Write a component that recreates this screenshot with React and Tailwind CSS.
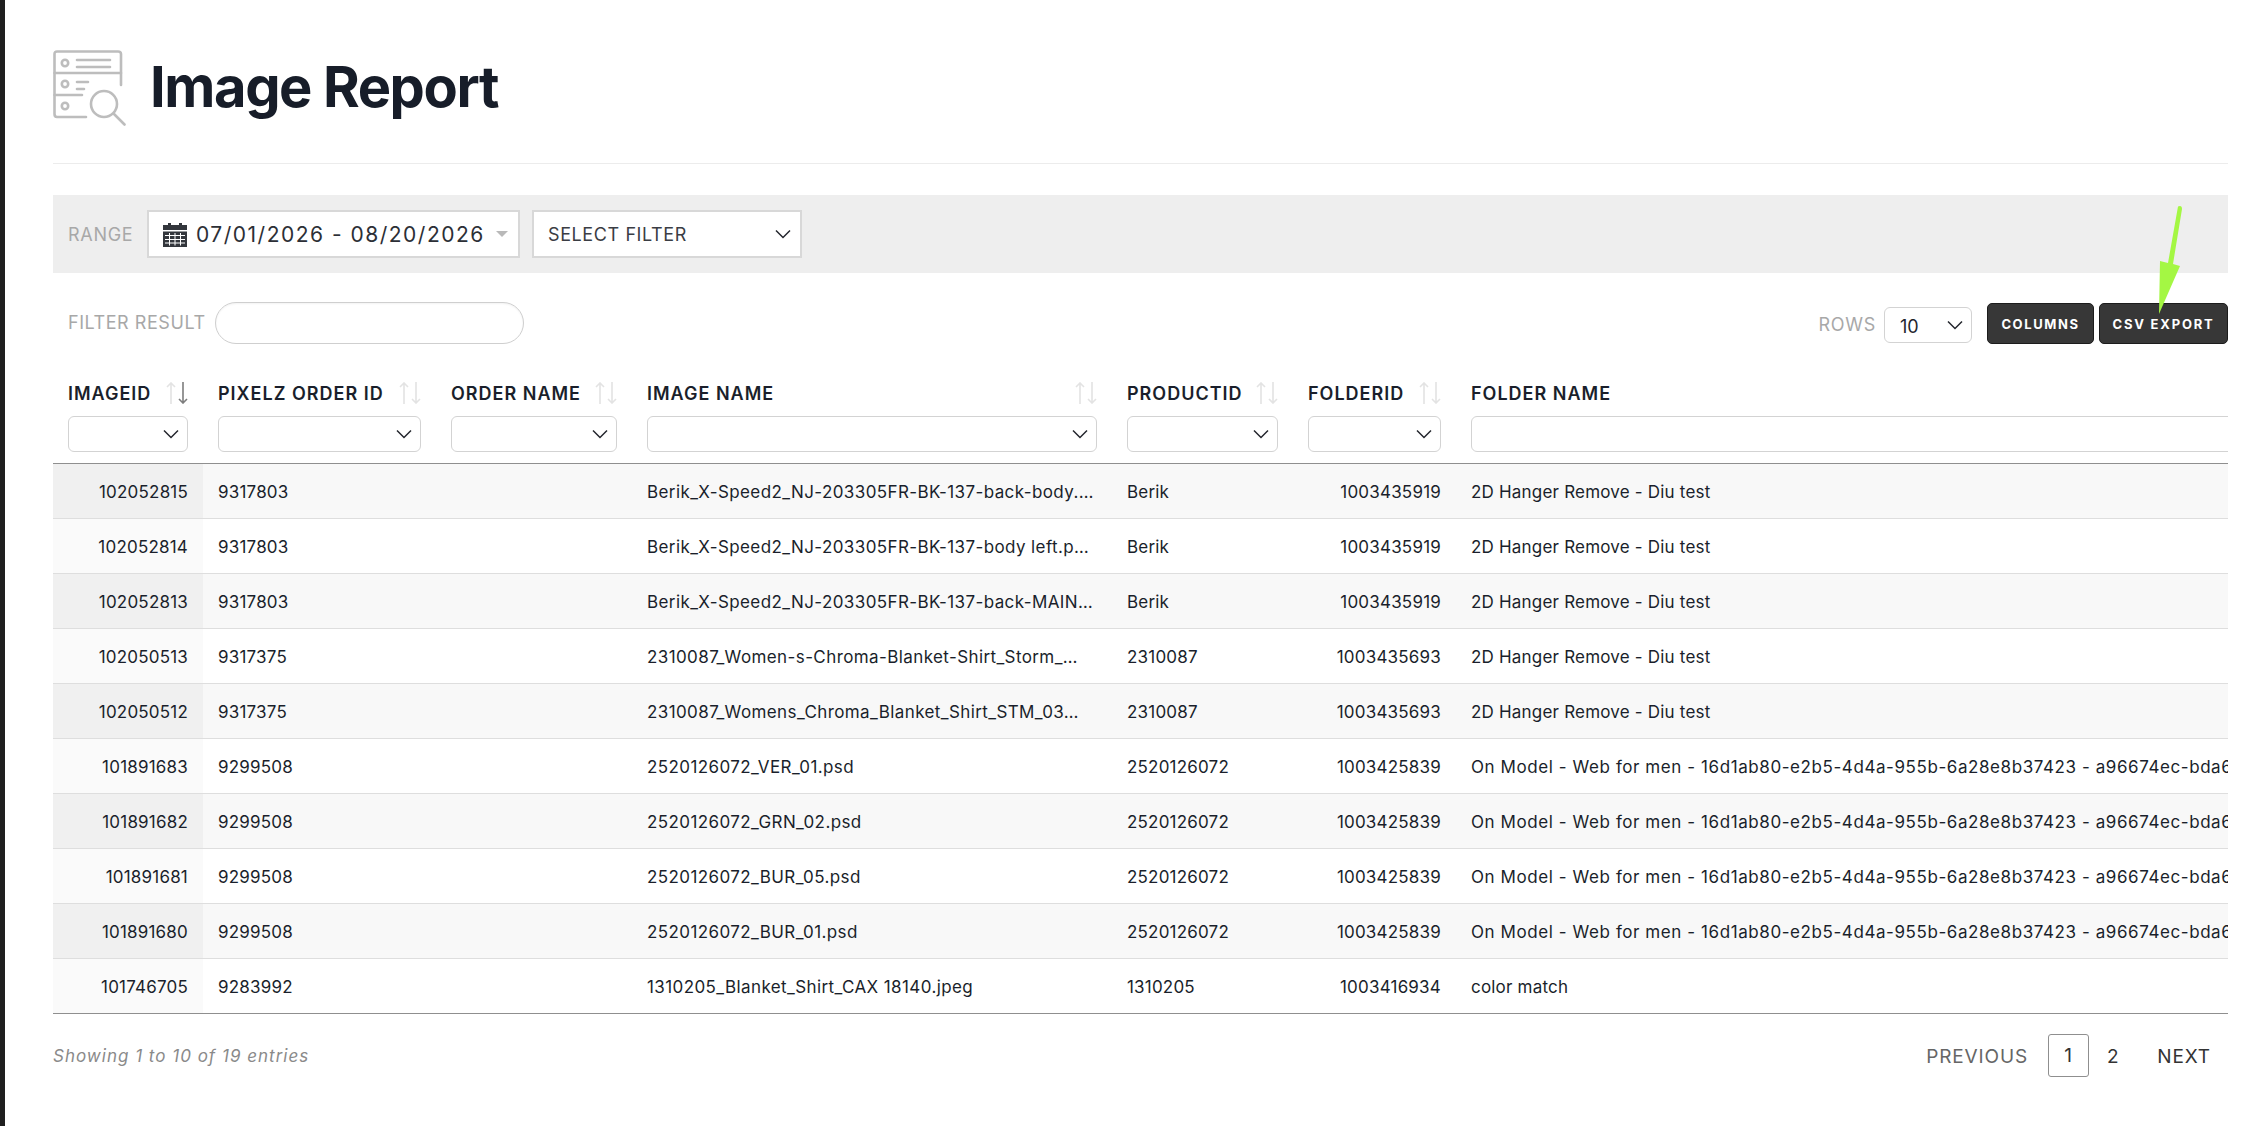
const ff = "font-['Inter',sans-serif]";
const Chev = ({ className = "" }) => (
  <svg viewBox="0 0 16 10" className={className} fill="none" stroke="#23262d" strokeWidth="1.5"><path d="M1 1.5 L8 8.5 L15 1.5" /></svg>
);
const Sort = ({ active }) => (
  <svg viewBox="0 0 22 22" className="w-[22px] h-[22px] shrink-0" fill="none" strokeWidth="1.6">
    <path stroke="#e3e3e3" d="M5 22 V1 M1 5 L5 1 L9 5" />
    <path stroke={active ? "#7d7d7d" : "#e3e3e3"} d="M17 0 V21 M13 17 L17 21 L21 17" />
  </svg>
);
const cols = [
  { n: "IMAGEID", w: "w-[150px]", s: true },
  { n: "PIXELZ ORDER ID", w: "w-[233px]" },
  { n: "ORDER NAME", w: "w-[196px]" },
  { n: "IMAGE NAME", w: "w-[480px]" },
  { n: "PRODUCTID", w: "w-[181px]" },
  { n: "FOLDERID", w: "w-[163px]" },
  { n: "FOLDER NAME", w: "w-[1000px]", text: true },
];
const H = "2D Hanger Remove - Diu test";
const M = "On Model - Web for men - 16d1ab80-e2b5-4d4a-955b-6a28e8b37423 - a96674ec-bda6-4d5e-8f1b-7c2a4b9e1234";
const rows = [
  ["102052815", "9317803", "Berik_X-Speed2_NJ-203305FR-BK-137-back-body.…", "Berik", "1003435919", H],
  ["102052814", "9317803", "Berik_X-Speed2_NJ-203305FR-BK-137-body left.p…", "Berik", "1003435919", H],
  ["102052813", "9317803", "Berik_X-Speed2_NJ-203305FR-BK-137-back-MAIN…", "Berik", "1003435919", H],
  ["102050513", "9317375", "2310087_Women-s-Chroma-Blanket-Shirt_Storm_…", "2310087", "1003435693", H],
  ["102050512", "9317375", "2310087_Womens_Chroma_Blanket_Shirt_STM_03…", "2310087", "1003435693", H],
  ["101891683", "9299508", "2520126072_VER_01.psd", "2520126072", "1003425839", M],
  ["101891682", "9299508", "2520126072_GRN_02.psd", "2520126072", "1003425839", M],
  ["101891681", "9299508", "2520126072_BUR_05.psd", "2520126072", "1003425839", M],
  ["101891680", "9299508", "2520126072_BUR_01.psd", "2520126072", "1003425839", M],
  ["101746705", "9283992", "1310205_Blanket_Shirt_CAX 18140.jpeg", "1310205", "1003416934", "color match"],
];
export default function App() {
  return (
    <div className={`${ff} relative w-[2266px] h-[1126px] overflow-hidden bg-white flex text-[#1a1f2b]`}>
      <div className="w-[5px] bg-[#1f1f1f] shrink-0" />
      <main className="w-[2175px] ml-[48px] flex flex-col">
        <header className="h-[163px] shrink-0 border-b border-[#ececec] flex items-start box-content">
          <svg viewBox="0 0 73 76" className="w-[73px] h-[76px] mt-[50px]" fill="none" stroke="#bdbdbd" strokeWidth="2.6" strokeLinecap="round" strokeLinejoin="round">
            <path d="M1.5 23 V4 Q1.5 1.5 4 1.5 H65 Q68 1.5 68 4 V23 H1.5 Z" />
            <path d="M1.5 23 V45 H29 M68 23 V35" />
            <path d="M1.5 45 V64 Q1.5 67 4 67 H33" />
            <circle cx="12" cy="13" r="3.2" /><circle cx="12" cy="34" r="3.2" /><circle cx="12" cy="56" r="3.2" />
            <path d="M24 10 H57 M24 17 H57 M24 32 H35 M24 39 H31" />
            <circle cx="51" cy="54" r="13" />
            <path d="M61 64 L71.5 74.5" />
          </svg>
          <h1 className="ml-[24px] mt-[55px] text-[56px] leading-[64px] font-bold tracking-[-1.4px] text-[#171d29]">Image Report</h1>
        </header>
        <div className="mt-[31px] h-[78px] shrink-0 bg-[#eeeeee] flex items-center pl-[15px]">
          <span className="text-[18px] tracking-[0.7px] text-[#a8a8a8] w-[79px] pt-[1px]">RANGE</span>
          <div className="w-[373px] h-[48px] bg-white border-2 border-[#d8d8d8] flex items-center pl-[14px] relative">
            <svg viewBox="0 0 24 25" className="w-[24px] h-[25px] shrink-0">
              <path fill="#33363c" d="M0 3 H5 V1 H8 V3 H16 V1 H19 V3 H24 V8 H0 Z M0 9.5 H24 V25 H0 Z" />
              <path stroke="#fff" strokeWidth="1" d="M6.5 11 V23.5 M12 11 V23.5 M17.5 11 V23.5 M2 13.5 H22 M2 17.5 H22 M2 21 H22" />
            </svg>
            <span className="ml-[9px] text-[21px] tracking-[1.5px] text-[#2c2f36] whitespace-nowrap pt-[1px]">07/01/2026 - 08/20/2026</span>
            <span className="absolute right-[10px] top-[19px] w-0 h-0 border-x-[6px] border-x-transparent border-t-[6px] border-t-[#b9b9b9]" />
          </div>
          <div className="ml-[12px] w-[270px] h-[48px] bg-white border-2 border-[#d8d8d8] flex items-center justify-between pl-[14px] pr-[9px]">
            <span className="text-[18px] tracking-[0.6px] text-[#3a3d44] pt-[1px]">SELECT FILTER</span>
            <Chev className="w-[16px] h-[10px]" />
          </div>
        </div>
        <div className="mt-[29px] h-[43px] shrink-0 flex items-center pl-[15px]">
          <span className="text-[18px] tracking-[0.55px] text-[#a8a8a8] w-[147px] whitespace-nowrap pb-[2px]">FILTER RESULT</span>
          <div className="w-[309px] h-[42px] rounded-full border border-[#cfcfcf] shadow-[inset_0_1px_2px_rgba(0,0,0,0.05)] -mt-[1px]" />
          <span className="ml-auto text-[18px] tracking-[0.7px] text-[#a8a8a8] pt-[1px]">ROWS</span>
          <div className="ml-[8px] w-[88px] h-[36px] rounded-[6px] border border-[#d3d3d3] flex items-center justify-between pl-[15px] pr-[8px] mt-[3px]">
            <span className="text-[18px] text-[#23262d] mt-[2px]">10</span>
            <Chev className="w-[16px] h-[10px]" />
          </div>
          <button className="ml-[15px] w-[107px] h-[41px] rounded-[5px] bg-[#373737] border border-[#1c1c1c] text-white text-[13px] font-bold tracking-[1.6px] pt-[2px]">COLUMNS</button>
          <button className="ml-[5px] w-[129px] h-[41px] rounded-[5px] bg-[#373737] border border-[#1c1c1c] text-white text-[13px] font-bold tracking-[1.8px] pt-[2px]">CSV EXPORT</button>
        </div>
        <div className="mt-[28px] overflow-hidden w-[2175px]">
          <table className="table-fixed border-separate border-spacing-0 w-[2403px]">
            <thead>
              <tr>
                {cols.map((c) => (
                  <th key={c.n} className={`${c.w} h-[91px] px-[15px] align-top font-normal text-left border-b border-[#8f8f8f] p-0`}>
                    <div className="h-[43px] flex items-center justify-between pb-[3px]">
                      <span className="text-[18px] font-semibold tracking-[1px] whitespace-nowrap">{c.n}</span>
                      {!c.text && <Sort active={c.s} />}
                    </div>
                    <div className={`h-[36px] ${c.text ? "rounded-l-[6px]" : "rounded-[6px]"} border border-[#d3d3d3] flex items-center justify-end pr-[8px]`}>
                      {!c.text && <Chev className="w-[16px] h-[10px]" />}
                    </div>
                  </th>
                ))}
              </tr>
            </thead>
            <tbody>
              {rows.map((r, i) => {
                const odd = i % 2 === 0;
                const bg = odd ? "bg-[#f8f8f8]" : "bg-white";
                const first = odd ? "bg-[#f0f0f0]" : "bg-[#fafafa]";
                const line = i === 9 ? "border-b border-[#8f8f8f]" : "border-b border-[#dedede]";
                const td = `${line} h-[55px] px-[15px] pt-[3px] text-[17px] whitespace-nowrap`;
                return (
                  <tr key={r[0]}>
                    <td className={`${td} tracking-[0.2px] text-right ${first}`}>{r[0]}</td>
                    <td className={`${td} tracking-[0.2px] ${bg}`}>{r[1]}</td>
                    <td className={`${td} ${bg}`}></td>
                    <td className={`${td} tracking-[0.4px] ${bg} truncate`}>{r[2]}</td>
                    <td className={`${td} tracking-[0.2px] ${bg}`}>{r[3]}</td>
                    <td className={`${td} tracking-[0.2px] ${bg} text-right`}>{r[4]}</td>
                    <td className={`${td} ${bg} ${r[5] === M ? "tracking-[0.58px]" : "tracking-[0.2px]"}`}>{r[5]}</td>
                  </tr>
                );
              })}
            </tbody>
          </table>
        </div>
        <div className="flex items-center h-[83px]">
          <span className="text-[17px] italic tracking-[1px] text-[#8a8a8a] pt-[3px]">Showing 1 to 10 of 19 entries</span>
          <div className="ml-auto flex items-center text-[19px] tracking-[0.9px] pr-[17px]">
            <span className="text-[#666] pt-[3px]">PREVIOUS</span>
            <span className="ml-[20px] w-[41px] h-[43px] rounded-[3px] border border-[#8f8f8f] flex items-center justify-center text-[#333] pt-[2px]">1</span>
            <span className="w-[48px] text-center text-[#333] pt-[3px]">2</span>
            <span className="ml-[20px] text-[#333] pt-[3px]">NEXT</span>
          </div>
        </div>
      </main>
      <svg viewBox="0 0 30 112" className="absolute left-[2155px] top-[204px] w-[30px] h-[112px]" fill="#a4f743">
        <path d="M23 2.5 Q27 1 27 5 L18 60 L25 62 L4 110 L5 57 L13 59 Z" />
      </svg>
    </div>
  );
}
